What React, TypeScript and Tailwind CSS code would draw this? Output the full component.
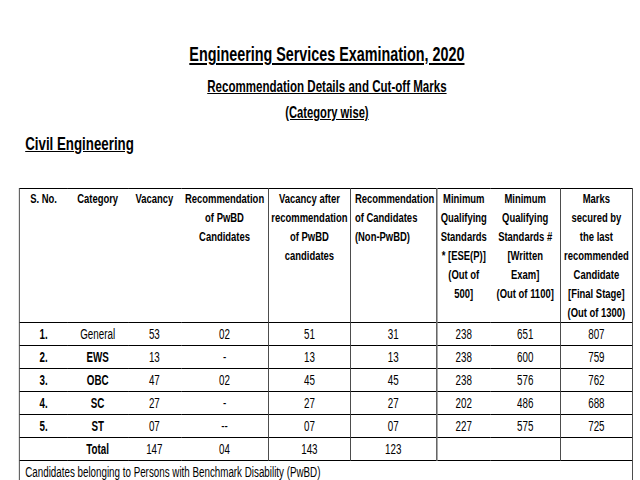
import React from "react";

const font = { fontFamily: '"Liberation Sans", Arial, sans-serif' };

const rows = [
  ["1.", "General", "53", "02", "51", "31", "238", "651", "807"],
  ["2.", "EWS", "13", "-", "13", "13", "238", "600", "759"],
  ["3.", "OBC", "47", "02", "45", "45", "238", "576", "762"],
  ["4.", "SC", "27", "-", "27", "27", "202", "486", "688"],
  ["5.", "ST", "07", "--", "07", "07", "227", "575", "725"],
  ["", "Total", "147", "04", "143", "123", "", "", ""],
];

// vertical rule after these column indexes
const rightBorder = [false, false, false, true, true, true, false, true, true];

export default function App() {
  return (
    <div className="w-[640px] h-[480px] bg-white overflow-hidden text-black" style={font}>
      <div className="w-[914px] origin-top-left scale-x-[0.7]">
        <div className="pt-[42px] pl-[20px] flex flex-col items-center">
          <div className="text-[20.5px] leading-[24px] font-bold underline">Engineering Services Examination, 2020</div>
          <div className="mt-[10px] text-[16.5px] leading-[20px] font-bold underline">Recommendation Details and Cut-off Marks</div>
          <div className="mt-[7px] text-[16px] leading-[20px] font-bold underline">(Category wise)</div>
        </div>
        <div className="pl-[36px] mt-[9px] text-[19px] leading-[24px] font-bold underline">Civil Engineering</div>
        <table className="ml-[27px] mt-[32px] w-[876px] table-fixed border-collapse">
          <colgroup>
            <col className="w-[69px]" />
            <col className="w-[86px]" />
            <col className="w-[76px]" />
            <col className="w-[125px]" />
            <col className="w-[117px]" />
            <col className="w-[123px]" />
            <col className="w-[77px]" />
            <col className="w-[100px]" />
            <col className="w-[103px]" />
          </colgroup>
          <tbody>
            <tr className="h-[130px] border-y border-black font-bold text-[13.5px] leading-[19px] align-top text-center">
              <td className="p-0 border-l-[1.5px] border-black">S. No.</td>
              <td className="p-0">Category</td>
              <td className="p-0">Vacancy</td>
              <td className="p-0 border-r-[1.5px] border-black">Recommendation<br />of PwBD<br />Candidates</td>
              <td className="p-0 border-r-[1.5px] border-black">Vacancy after<br />recommendation<br />of PwBD<br />candidates</td>
              <td className="p-0 pl-[6px] text-left border-r-2 border-[#555]">Recommendation<br />of Candidates<br />(Non-PwBD)</td>
              <td className="p-0">Minimum<br />Qualifying<br />Standards<br />* [ESE(P)]<br />(Out of<br />500]</td>
              <td className="p-0 border-r-[1.5px] border-black">Minimum<br />Qualifying<br />Standards #<br />[Written<br />Exam]<br />(Out of 1100]</td>
              <td className="p-0 border-r-[1.5px] border-black">Marks<br />secured by<br />the last<br />recommended<br />Candidate<br />[Final Stage]<br />(Out of 1300)</td>
            </tr>
            {rows.map((r, i) => (
              <tr key={i} className="h-[23px] border-y border-black text-center text-[14px] leading-[18px]">
                {r.map((c, j) => (
                  <td
                    key={j}
                    className={
                      "p-0 " +
                      (j === 0 ? "border-l-[1.5px] border-black " : "") +
                      (rightBorder[j] ? (j === 5 ? "border-r-2 border-[#555] " : "border-r-[1.5px] border-black ") : "") +
                      (j === 0 || (j === 1 && c !== "General") ? "font-bold" : "")
                    }
                  >
                    {c}
                  </td>
                ))}
              </tr>
            ))}
            <tr className="h-[22px] border-t border-black">
              <td
                colSpan={9}
                className="p-0 pl-[8px] text-left text-[14px] leading-[18px] border-x-[1.5px] border-black"
              >
                Candidates belonging to Persons with Benchmark Disability (PwBD)
              </td>
            </tr>
          </tbody>
        </table>
      </div>
    </div>
  );
}
